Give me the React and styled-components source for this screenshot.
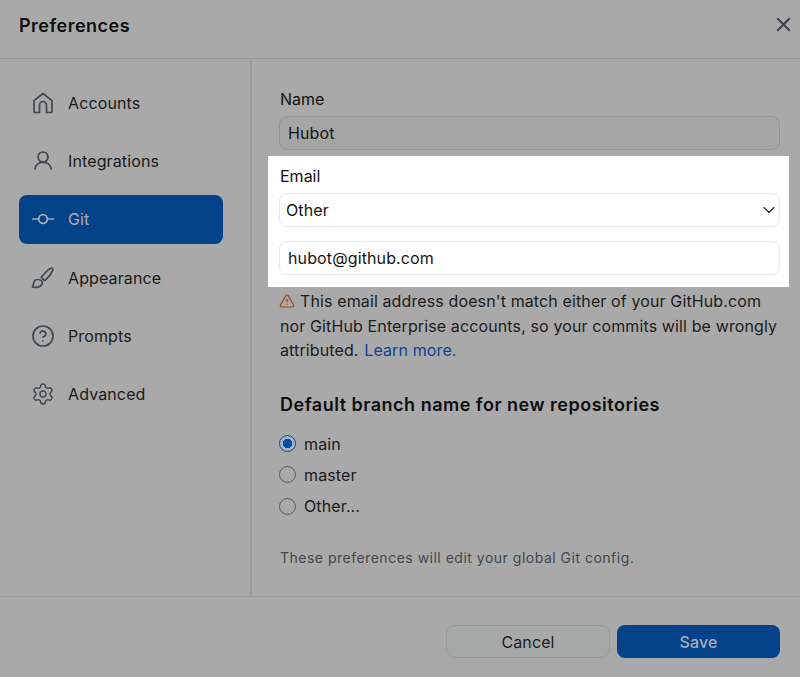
import * as React from "react";
import styled, { createGlobalStyle } from "styled-components";
import { CircleHelp, Settings, TriangleAlert, ChevronDown, X } from "lucide-react";

const GlobalStyle = createGlobalStyle`
  html, body {
    margin: 0;
    padding: 0;
    background: #a9a9a9;
  }
  * {
    box-sizing: border-box;
  }
`;

// Icons the packages don't have in this exact shape
const IconSvg = styled.svg.attrs({
  width: 24,
  height: 24,
  viewBox: "0 0 24 24",
  fill: "none",
  stroke: "currentColor",
  strokeWidth: 1.7,
  strokeLinejoin: "round",
  strokeLinecap: "round",
})``;

function HouseIcon() {
  return (
    <IconSvg>
      <path d="M4 21.5h4.5V14a3.5 3.5 0 0 1 7 0v7.5H20a1 1 0 0 0 1-1V9.6L12 2.5 3 9.6v10.9a1 1 0 0 0 1 1z" />
    </IconSvg>
  );
}

function PersonIcon() {
  return (
    <IconSvg>
      <circle cx="12" cy="8" r="5" />
      <path d="M4 20c.3-4 3.6-6.6 8-6.6s7.700 2.600 8 6.600" />
    </IconSvg>
  );
}

function CommitIcon() {
  return (
    <IconSvg>
      <circle cx="12" cy="12" r="4.300" />
      <path d="M1.800 12h5.900M16.300 12h5.900" />
    </IconSvg>
  );
}

function BrushIcon() {
  return (
    <IconSvg>
      <path d="M20 2.200c1.200-.4 2.300.8 1.800 2-1.200 3-4.500 7.500-8.300 10.500l-3.300-3.200c3-3.800 6.800-8.200 9.800-9.300z" />
      <path d="M6.500 13.500c-2 0-3.500 1.500-3.800 3.500-.2 1.600-.7 3-1.200 4 2.500.6 6 .3 8-1 2-1.400 2.400-3.500 1-5-1-1.200-2.400-1.600-4-1.500z" />
    </IconSvg>
  );
}

function HelpIcon() {
  return <CircleHelp size={24} strokeWidth={1.7} />;
}

function GearIcon() {
  return <Settings size={24} strokeWidth={1.4} />;
}

const navItems = [
  { label: "Accounts", Icon: HouseIcon },
  { label: "Integrations", Icon: PersonIcon },
  { label: "Git", Icon: CommitIcon, active: true },
  { label: "Appearance", Icon: BrushIcon },
  { label: "Prompts", Icon: HelpIcon },
  { label: "Advanced", Icon: GearIcon },
];

const branches = [
  { label: "main", checked: true },
  { label: "master" },
  { label: "Other..." },
];

export default function App() {
  return (
    <Dialog>
      <GlobalStyle />
      <Header>
        <Title>Preferences</Title>
        <CloseButton>
          <X size={23} strokeWidth={2} />
        </CloseButton>
      </Header>
      <Body>
        <Sidebar>
          {navItems.map(({ label, Icon, active }) => (
            <NavItem key={label} $active={active}>
              <NavIcon $active={active}>
                <Icon />
              </NavIcon>
              {label}
            </NavItem>
          ))}
        </Sidebar>
        <Content>
          <Label>Name</Label>
          <TextField $muted>Hubot</TextField>
          <Highlight>
            <Label>Email</Label>
            <SelectField>
              Other
              <ChevronDown size={20} strokeWidth={1.4} color="#24292e" />
            </SelectField>
            <TextField>hubot@github.com</TextField>
          </Highlight>
          <Warning>
            <WarningIcon>
              <TriangleAlert size={16} strokeWidth={1.8} />
            </WarningIcon>
            This email address doesn't match either of your GitHub.com nor GitHub Enterprise accounts, so your commits will be wrongly attributed. <LearnMore>Learn more.</LearnMore>
          </Warning>
          <SectionTitle>Default branch name for new repositories</SectionTitle>
          <RadioList>
            {branches.map(({ label, checked }) => (
              <RadioRow key={label}>
                <Radio $checked={checked} />
                {label}
              </RadioRow>
            ))}
          </RadioList>
          <Note>These preferences will edit your global Git config.</Note>
        </Content>
      </Body>
      <Footer>
        <CancelButton>Cancel</CancelButton>
        <SaveButton>Save</SaveButton>
      </Footer>
    </Dialog>
  );
}

const Dialog = styled.div`
  width: 800px;
  height: 677px;
  display: flex;
  flex-direction: column;
  overflow: hidden;
  background: #a9a9a9;
  color: #111;
  font: 400 16px/24px Inter, "Liberation Sans", sans-serif;
  letter-spacing: 0.12px;
`;

const Header = styled.div`
  height: 59px;
  flex: none;
  display: flex;
  align-items: center;
  justify-content: space-between;
  padding: 0 5px 0 19px;
  border-bottom: 1px solid #999;
`;

const Title = styled.div`
  font-size: 18px;
  font-weight: 600;
  letter-spacing: 0.5px;
  color: #0e0e0e;
  margin-top: -7px;
`;

const CloseButton = styled.div`
  display: flex;
  color: #3a424c;
  margin-top: -9px;
`;

const Body = styled.div`
  flex: 1;
  display: flex;
  min-height: 0;
`;

const Sidebar = styled.div`
  width: 252px;
  flex: none;
  padding: 19px 27px 0 19px;
  display: flex;
  flex-direction: column;
  gap: 9.4px;
  border-right: 2px solid #9b9b9b;
`;

const NavItem = styled.div`
  height: 49px;
  display: flex;
  align-items: center;
  gap: 13px;
  padding-left: 12px;
  border-radius: 8px;
  background: ${(p) => (p.$active ? "#044289" : "transparent")};
  color: ${(p) => (p.$active ? "#a9adb5" : "#1a1a1a")};
`;

const NavIcon = styled.span`
  display: flex;
  color: ${(p) => (p.$active ? "#a9adb5" : "#3f4752")};
`;

const Content = styled.div`
  flex: 1;
  padding: 28px 20px 0 28px;
  display: flex;
  flex-direction: column;
  min-width: 0;
`;

const Label = styled.div`
  height: 24px;
  margin-bottom: 5px;
  color: #111;
  letter-spacing: 0;
`;

const TextField = styled.div`
  height: 34px;
  display: flex;
  align-items: center;
  margin-left: -1px;
  padding: 0 8px;
  border-radius: 8px;
  border: ${(p) => (p.$muted ? "1.5px solid #939597" : "1.5px solid #e4e6ec")};
  background: ${(p) => (p.$muted ? "#a5a5a5" : "#fff")};
  color: #151515;
`;

const Highlight = styled.div`
  margin: 6px -9px 0 -12px;
  padding: 8px 9px 12px 12px;
  background: #fff;
  display: flex;
  flex-direction: column;
`;

const SelectField = styled.div`
  height: 34px;
  display: flex;
  align-items: center;
  justify-content: space-between;
  margin-left: -1px;
  padding: 0 0 0 6px;
  border-radius: 8px;
  border: 1.5px solid #e4e6ec;
  margin-bottom: 14px;
  color: #151515;
`;

const Warning = styled.div`
  margin-top: 2px;
  line-height: 24.5px;
  color: #1c1c1c;
`;

const WarningIcon = styled.span`
  display: inline-block;
  vertical-align: -2px;
  margin-right: 5px;
  margin-left: -1px;
  color: #a5461a;
  height: 16px;
`;

const LearnMore = styled.span`
  color: #0e4492;
  margin-left: 1px;
`;

const SectionTitle = styled.div`
  margin-top: 30px;
  font-size: 18px;
  font-weight: 600;
  letter-spacing: 0.5px;
  color: #0e0e0e;
`;

const RadioList = styled.div`
  margin-top: 15px;
  display: flex;
  flex-direction: column;
  gap: 7.3px;
`;

const RadioRow = styled.div`
  display: flex;
  align-items: center;
  gap: 8px;
  margin-left: -1px;
  color: #1a1a1a;
`;

const Radio = styled.span`
  width: 17px;
  height: 17px;
  border-radius: 50%;
  flex: none;
  border: ${(p) => (p.$checked ? "1.5px solid #044ab0" : "1.5px solid #55585c")};
  background: ${(p) => (p.$checked ? "radial-gradient(circle, #044ab0 0 4.5px, #a9b0c0 5px)" : "transparent")};
`;

const Note = styled.div`
  margin-top: 28px;
  font-size: 14px;
  color: #43484e;
  letter-spacing: 0.5px;
`;

const Footer = styled.div`
  flex: none;
  height: 81px;
  display: flex;
  justify-content: flex-end;
  gap: 7px;
  padding: 28px 20px 0 0;
  border-top: 1px solid #999;
`;

const CancelButton = styled.div`
  width: 164px;
  height: 33px;
  display: flex;
  align-items: center;
  justify-content: center;
  border-radius: 8px;
  border: 1.5px solid #999b9b;
  background: #a7a8a8;
  color: #1c1c1c;
`;

const SaveButton = styled.div`
  width: 163px;
  height: 33px;
  display: flex;
  align-items: center;
  justify-content: center;
  border-radius: 8px;
  background: #044289;
  color: #a9adb8;
  font-weight: 500;
`;
